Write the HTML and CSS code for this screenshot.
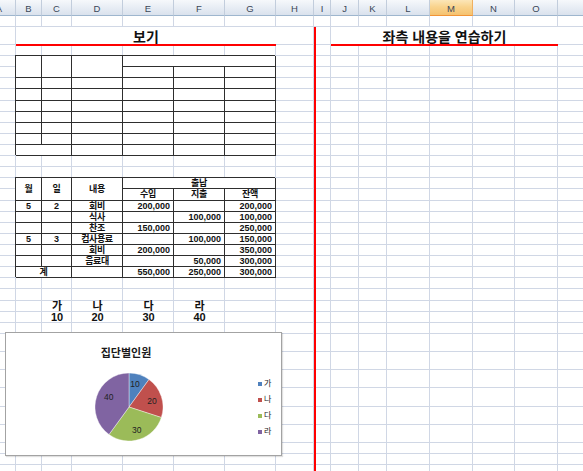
FILE: index.html
```html
<!DOCTYPE html>
<html lang="ko">
<head>
<meta charset="utf-8">
<title>보기</title>
<link rel="stylesheet" href="styles.css">
</head>
<body>
<div class="sheet">
  <div class="head">
    <div class="hd hd-a">A</div><div class="hd">B</div><div class="hd">C</div><div class="hd">D</div><div class="hd">E</div><div class="hd">F</div><div class="hd">G</div><div class="hd">H</div><div class="hd">I</div><div class="hd">J</div><div class="hd">K</div><div class="hd">L</div><div class="hd sel">M</div><div class="hd">N</div><div class="hd">O</div><div class="hd last"></div>
  </div>

  <div class="vlines"><i></i><i></i><i></i><i></i><i></i><i></i><i></i><i></i><i></i><i></i><i></i><i></i><i></i><i></i><i></i><i></i></div>

  <div class="hlines"><i></i><i></i><i></i><i></i><i></i><i></i><i></i><i></i><i></i><i></i><i></i><i></i><i></i><i></i><i></i><i></i><i></i><i></i><i></i><i></i><i></i><i></i><i></i><i></i><i></i><i></i><i></i><i></i><i></i><i></i><i></i><i></i><i></i><i></i><i></i><i></i><i></i></div>

  <div class="title title-left">보기</div>
  <div class="title title-right">좌측 내용을 연습하기</div>
  <div class="redv"></div>

  <div class="tbl tbl1">
    <div class="rs2"></div><div class="rs2"></div><div class="rs2"></div><div class="cs3"></div>
    <div></div><div></div><div></div>
    <div></div><div></div><div></div><div></div><div></div><div></div>
    <div></div><div></div><div></div><div></div><div></div><div></div>
    <div></div><div></div><div></div><div></div><div></div><div></div>
    <div></div><div></div><div></div><div></div><div></div><div></div>
    <div></div><div></div><div></div><div></div><div></div><div></div>
    <div></div><div></div><div></div><div></div><div></div><div></div>
    <div class="cs2"></div><div></div><div></div><div></div><div></div>
  </div>

  <div class="tbl tbl2">
    <div class="rs2 k">월</div><div class="rs2 k">일</div><div class="rs2 k">내용</div><div class="cs3 k">출납</div>
    <div class="k">수입</div><div class="k">지출</div><div class="k">잔액</div>

    <div>5</div><div>2</div><div class="k">회비</div><div class="r">200,000</div><div class="r"></div><div class="r">200,000</div>
    <div></div><div></div><div class="k">식사</div><div class="r"></div><div class="r">100,000</div><div class="r">100,000</div>
    <div></div><div></div><div class="k">찬조</div><div class="r">150,000</div><div class="r"></div><div class="r">250,000</div>
    <div>5</div><div>3</div><div class="k">컴사용료</div><div class="r"></div><div class="r">100,000</div><div class="r">150,000</div>
    <div></div><div></div><div class="k">회비</div><div class="r">200,000</div><div class="r"></div><div class="r">350,000</div>
    <div></div><div></div><div class="k">음료대</div><div class="r"></div><div class="r">50,000</div><div class="r">300,000</div>
    <div class="cs2 k">계</div><div></div><div class="r">550,000</div><div class="r">250,000</div><div class="r">300,000</div>
  </div>

  <div class="labels">
    <div>가</div><div>나</div><div>다</div><div>라</div>
    <div>10</div><div>20</div><div>30</div><div>40</div>
  </div>

  <div class="chart">
    <div class="plot">
      <div class="chart-title">집단별인원</div>
      <svg class="pie" viewBox="0 0 68 68" width="68" height="68">
        <path class="s-blue" d="M34 34 L34 0 A34 34 0 0 1 53.98 6.49 Z"/>
        <path class="s-red" d="M34 34 L53.98 6.49 A34 34 0 0 1 66.34 44.51 Z"/>
        <path class="s-green" d="M34 34 L66.34 44.51 A34 34 0 0 1 14.02 61.51 Z"/>
        <path class="s-purple" d="M34 34 L14.02 61.51 A34 34 0 0 1 34 0 Z"/>
        <text x="40" y="11">10</text>
        <text x="57" y="27.5">20</text>
        <text x="41.7" y="57">30</text>
        <text x="13.7" y="24">40</text>
      </svg>
    </div>
    <div class="legend">
      <div class="legend-item"><span class="sw s-blue-bg"></span>가</div>
      <div class="legend-item"><span class="sw s-red-bg"></span>나</div>
      <div class="legend-item"><span class="sw s-green-bg"></span>다</div>
      <div class="legend-item"><span class="sw s-purple-bg"></span>라</div>
    </div>
  </div>
</div>
</body>
</html>
```
FILE: styles.css
```css
* { box-sizing: border-box; }
html, body { margin: 0; padding: 0; background: #fff; }
body {
  font-family: "Liberation Sans", "Noto Sans CJK KR", sans-serif;
  color: #111;
}

.sheet {
  --cols: 16px 26px 30px 51px 51px 51px 51px 38px 17px 28px 28px 43px 43px 42px 43px 25px;
  --rows: 11px 18px 11px 11px 11px 11px 12px 11px 11px 11px 11px 11px 11px 11px 11px 12px 11px 11px 11px 11px 11px 11px 11px 11px 12px 11px 11px 11px 18px 18px 18px 19px 18px 18px 11px 11px 11px;
  position: relative;
  width: 583px;
  height: 471px;
  overflow: hidden;
  display: grid;
  grid-template-columns: var(--cols);
  grid-template-rows: 16px var(--rows);
}

/* column header */
.head {
  grid-column: 1 / -1;
  grid-row: 1;
  display: grid;
  grid-template-columns: var(--cols);
}
.hd {
  display: flex;
  align-items: center;
  justify-content: center;
  padding-top: 2px;
  overflow: hidden;
  font-size: 9.5px;
  color: #3a4658;
  background: linear-gradient(to bottom, #f6f8fb 0%, #e9eef5 45%, #dae2ed 100%);
  border-right: 1px solid #c2cddc;
  border-bottom: 1px solid #9eb6ce;
}
.hd-a { justify-content: flex-end; padding-right: 13px; }
.hd.sel {
  background: linear-gradient(to bottom, #fce6b8 0%, #f9d48e 45%, #f5c270 100%);
  border-right-color: #f0b060;
  border-bottom-color: #f29436;
}
.hd.last { border-right: 0; }

/* gridlines */
.vlines {
  grid-column: 1 / -1;
  grid-row: 2 / -1;
  display: grid;
  grid-template-columns: var(--cols);
}
.vlines i { border-right: 1px solid #d0d7e5; }
.vlines i:last-child { border-right: 0; }

.hlines {
  grid-column: 1 / -1;
  grid-row: 2 / -1;
  display: grid;
  grid-template-rows: var(--rows);
}
.hlines i { border-bottom: 1px solid #d0d7e5; }

/* titles */
.title {
  grid-row: 3;
  display: flex;
  align-items: center;
  justify-content: center;
  background: #fff;
  border-bottom: 1px solid #f00;
  box-shadow: 0 1px 0 #f00;
  font-family: "Noto Sans CJK KR", sans-serif;
  font-size: 14px;
  font-weight: bold;
  line-height: 1;
  color: #111;
}
.title-left { grid-column: 2 / 8; }
.title-right { grid-column: 10 / 16; }

.redv {
  grid-column: 9;
  grid-row: 3 / -1;
  border-left: 2px solid #f00;
}

/* tables */
.tbl {
  grid-column: 2 / 8;
  display: grid;
  grid-template-columns: 26px 30px 51px 51px 51px 51px;
  box-shadow: -1px -1px 0 #2e2e2e;
}
.tbl1 {
  grid-row: 5 / 14;
  grid-template-rows: 11px 11px 11px 12px 11px 11px 11px 11px 11px;
}
.tbl2 {
  grid-row: 16 / 25;
  grid-template-rows: 11px 12px 11px 11px 11px 11px 11px 11px 11px;
}
.tbl > div {
  display: flex;
  align-items: center;
  justify-content: center;
  background: #fff;
  border-right: 1px solid #2e2e2e;
  border-bottom: 1px solid #2e2e2e;
  font-size: 9px;
  font-weight: bold;
  line-height: 1;
  white-space: nowrap;
}
.tbl > .r { justify-content: flex-end; padding-right: 3px; }
.tbl > .k { letter-spacing: -0.4px; }
.rs2 { grid-row: span 2; }
.cs2 { grid-column: span 2; }
.cs3 { grid-column: span 3; }

/* value labels */
.labels {
  grid-column: 3 / 7;
  grid-row: 27 / 29;
  display: grid;
  grid-template-columns: 30px 51px 51px 51px;
  grid-template-rows: 11px 11px;
}
.labels > div {
  display: flex;
  align-items: center;
  justify-content: center;
  font-size: 11px;
  font-weight: bold;
  line-height: 11px;
  white-space: nowrap;
}

/* chart */
.chart {
  position: absolute;
  left: 5px;
  top: 332px;
  width: 277px;
  height: 124px;
  background: #fff;
  border: 1px solid #a3a3a3;
  box-shadow: 1px 1px 1px rgba(0, 0, 0, 0.12);
  display: flex;
}
.plot {
  width: 240px;
  display: flex;
  flex-direction: column;
  align-items: center;
}
.chart-title {
  margin-top: 13px;
  font-size: 11px;
  font-weight: bold;
  line-height: 14px;
  color: #1a1a1a;
}
.pie {
  display: block;
  margin-top: 13px;
  margin-left: 6px;
}
.pie path { stroke: #fff; stroke-width: 0.4; }
.pie text {
  font-family: "Liberation Sans", sans-serif;
  font-size: 8.5px;
  fill: #222;
  text-anchor: middle;
  dominant-baseline: central;
}
.s-blue { fill: #4f81bd; }
.s-red { fill: #c0504d; }
.s-green { fill: #9bbb59; }
.s-purple { fill: #8064a2; }

.legend {
  margin-left: 12px;
  padding-top: 43px;
  display: flex;
  flex-direction: column;
}
.legend-item {
  display: flex;
  align-items: center;
  gap: 2px;
  height: 16px;
  font-size: 8px;
  line-height: 1;
  color: #222;
}
.sw { display: block; width: 4px; height: 4px; }
.s-blue-bg { background: #4f81bd; }
.s-red-bg { background: #c0504d; }
.s-green-bg { background: #9bbb59; }
.s-purple-bg { background: #8064a2; }
```
